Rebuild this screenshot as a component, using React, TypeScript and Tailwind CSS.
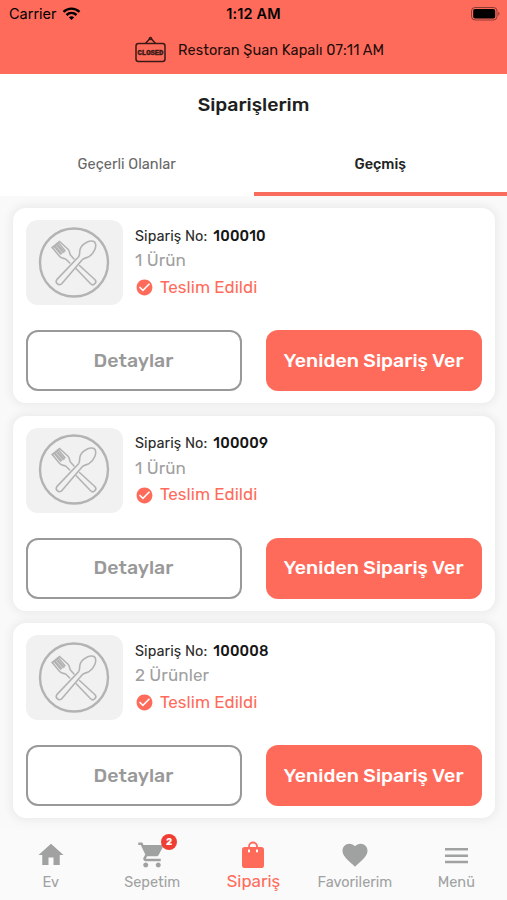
import React from "react";
import { MdHome, MdShoppingCart, MdFavorite, MdCheckCircle } from "react-icons/md";

interface Order {
  no: string;
  items: string;
}

const orders: Order[] = [
  { no: "100010", items: "1 Ürün" },
  { no: "100009", items: "1 Ürün" },
  { no: "100008", items: "2 Ürünler" },
];

const WifiIcon = () => (
  <svg width="19" height="14" viewBox="0 0 18 14" fill="none" stroke="#000" strokeWidth="2.4">
    <path d="M1 4.8C5.5.5 12.5.5 17 4.8" />
    <path d="M4 8c2.9-2.7 7.1-2.7 10 0" />
    <path d="M6.3 10.3c1.6-1.4 3.8-1.4 5.4 0L9 13z" fill="#000" stroke="none" />
  </svg>
);

const BatteryIcon = () => (
  <svg width="30" height="14" viewBox="0 0 30 14">
    <rect x=".5" y=".5" width="25.5" height="12.5" rx="3.5" fill="none" stroke="#000" strokeOpacity=".45" />
    <rect x="2.2" y="2" width="22" height="9.5" rx="1.8" fill="#000" />
    <path d="M27.3 4.8v4c1.6-.6 1.6-3.4 0-4z" fill="#000" fillOpacity=".5" />
  </svg>
);

const ClosedSign = () => (
  <svg className="overflow-visible" width="31" height="27" viewBox="0 0 31 27" fill="none" stroke="#3a1a16" strokeWidth="1.5">
    <rect x="1" y="6.5" width="29" height="18" rx="2.5" />
    <path d="M10.5 6.5l4-4.5M20.500 6.500l-4-4.500" />
    <circle cx="15.5" cy="1.5" r="1.1" />
    <text
      x="15.5"
      y="18.4"
      textAnchor="middle"
      fontSize="7.2"
      fontWeight="700"
      fontFamily="Liberation Mono, monospace"
      fill="#3a1a16"
      strokeWidth=".5"
    >
      CLOSED
    </text>
  </svg>
);

// Crossed fork and spoon on a plate
const PlateIcon = () => (
  <svg
    width="72"
    height="72"
    viewBox="0 0 72 72"
    fill="none"
    stroke="#b3b3b3"
    strokeWidth="1.6"
    strokeLinejoin="round"
    strokeLinecap="round"
  >
    <circle cx="36" cy="35.5" r="34" strokeWidth="2.4" />
    <path d="M21.500 14.500l8.300 7.500c2.200 2 1.400 4.300 2.800 6.300l3.400 3.700M14.200 20.500l7.500 9c2 2.300 4.300 1.500 6.300 2.800l3.700 3.700" />
    <path d="M21.500 14.500l-1.200 1.200 6.700 8M19.200 16.500l-1 .9 6.800 7.900M17 18.300l-1 .9 6.600 7.800M14.200 20.500l1.100-.9" />
    <path d="M20.300 15.700l-1.100.8M18.200 17.400l-1.200.9M16 19.200l-.8.500" />
    <path d="M19.500 17.500l6.500 7.500M17.300 19.300l6.200 7.200" />
    <path d="M41.500 38.500l15.300 14a3 3 0 0 1-4.200 4.300L38.200 41.800" />
    <path d="M56.800 15.200c-3.800-3-12.500.8-14.600 6.800-1.200 3.400.3 5.400-1.800 8L19 52.400a3.200 3.200 0 0 0 4.500 4.500L44 33c2.200-2.400 4.300-1.700 7-3.400 5.300-3.200 8.300-10.800 5.800-14.400z" />
  </svg>
);

const BagIcon = () => (
  <svg width="22" height="27" viewBox="0 0 22 27" className="fill-[#ff6b5b]">
    <path d="M7 7V5.500a4 4 0 0 1 8 0V7" fill="none" stroke="#ff6b5b" strokeWidth="1.8" />
    <rect y="6" width="22" height="21" rx="2.8" />
    <path d="M7 8.500v2.800M15 8.500v2.800" stroke="#fff" strokeWidth="2" />
  </svg>
);

const MenuIcon = () => (
  <svg width="23" height="29" viewBox="0 0 23 29" fill="none" stroke="currentColor" strokeWidth="2.5">
    <path d="M0 7.300h23M0 13.700h23M0 20.100h23" />
  </svg>
);

const OrderCard = ({ order }: { order: Order }) => (
  <article className="h-[195px] rounded-[13px] bg-white px-[13px] pt-[12px] shadow-[0_0_9px_3px_rgba(0,0,0,0.055)]">
    <div className="flex gap-[12.5px]">
      <div className="flex h-[85px] w-[97px] items-center justify-center rounded-[12px] bg-[#f1f1f1]">
        <PlateIcon />
      </div>
      <div className="pt-[5px]">
        <p className="flex h-[23px] items-center gap-[6px] text-[14.5px] text-[#292929]">
          <span className="tracking-[0.1px]">Sipariş No:</span>
          <span className="font-medium tracking-[0.15px] text-[#151515]">{order.no}</span>
        </p>
        <p className="h-[25px] text-[17px] leading-[25px] tracking-[0.1px] text-[#a0a0a0]">{order.items}</p>
        <p className="flex h-[29px] items-center gap-[6px] text-[17px] tracking-[0.05px] text-[#ff6b5b]">
          <MdCheckCircle className="size-[19px]" />
          Teslim Edildi
        </p>
      </div>
    </div>
    <div className="mt-[25px] grid grid-cols-2 gap-[24px]">
      <button className="h-[61px] rounded-[12px] border-2 border-[#999] text-[19.5px] font-medium text-[#999]">
        Detaylar
      </button>
      <button className="h-[61px] rounded-[12px] bg-[#ff6b5b] text-[19.5px] font-medium tracking-[0.03px] text-white">
        Yeniden Sipariş Ver
      </button>
    </div>
  </article>
);

const App: React.FC = () => {
  return (
    <div className="flex h-[900px] w-[507px] flex-col overflow-hidden bg-[#f9f9f9] font-['Rubik',Roboto,sans-serif]">
      <header className="h-[74px] shrink-0 bg-[#ff6b5b] text-black">
        <div className="grid h-[27px] grid-cols-3 items-center font-['Inter',sans-serif] text-[14.5px]">
          <div className="flex items-center gap-[5px] pl-[9px]">
            <span>Carrier</span>
            <WifiIcon />
          </div>
          <span className="text-center font-semibold tracking-[0.15px]">1:12 AM</span>
          <div className="flex justify-end pr-[6px]">
            <BatteryIcon />
          </div>
        </div>
        <div className="flex items-center gap-[12px] pt-[10px] pl-[135px]">
          <ClosedSign />
          <span className="text-[14.5px] tracking-[0.08px] text-[#240d0a]">Restoran Şuan Kapalı 07:11 AM</span>
        </div>
      </header>

      <section className="h-[122px] shrink-0 bg-white text-center">
        <h1 className="pt-[17px] text-[19.5px] leading-[28px] font-medium text-[#202020]">Siparişlerim</h1>
        <nav className="mt-[12px] grid grid-cols-2 text-[14.5px]">
          <button className="h-[65px] border-b-4 border-transparent pt-[6px] tracking-[0.06px] text-[#666]">
            Geçerli Olanlar
          </button>
          <button className="h-[65px] border-b-4 border-[#f96c5d] pt-[6px] font-medium text-[#222]">Geçmiş</button>
        </nav>
      </section>

      <main className="flex flex-1 flex-col gap-[12.6px] px-[12.5px] pt-[12px]">
        {orders.map((order) => (
          <OrderCard key={order.no} order={order} />
        ))}
      </main>

      <footer className="grid h-[70px] shrink-0 grid-cols-5 bg-[#fafafa] text-center text-[14.5px] text-[#a0a2a2]">
        <div className="flex flex-col items-center gap-[2px] pt-[10px]">
          <MdHome className="size-[30px]" />
          <span className="leading-[20px]">Ev</span>
        </div>
        <div className="flex flex-col items-center gap-[2px] pt-[10px]">
          <div className="relative">
            <MdShoppingCart className="size-[30px]" />
            <span className="absolute -top-[6px] left-[24px] flex size-[16px] items-center justify-center rounded-full bg-[#ef3f34] text-[9.5px] font-bold text-white">
              2
            </span>
          </div>
          <span className="leading-[20px]">Sepetim</span>
        </div>
        <div className="flex flex-col items-center gap-[2px] pt-[11px] text-[#ff6b5b]">
          <BagIcon />
          <span className="text-[17px] leading-[22px]">Sipariş</span>
        </div>
        <div className="flex flex-col items-center gap-[2px] pt-[10px]">
          <MdFavorite className="size-[30px]" />
          <span className="leading-[20px]">Favorilerim</span>
        </div>
        <div className="flex flex-col items-center gap-[1px] pt-[12px]">
          <MenuIcon />
          <span className="leading-[20px]">Menü</span>
        </div>
      </footer>
    </div>
  );
};

export default App;
